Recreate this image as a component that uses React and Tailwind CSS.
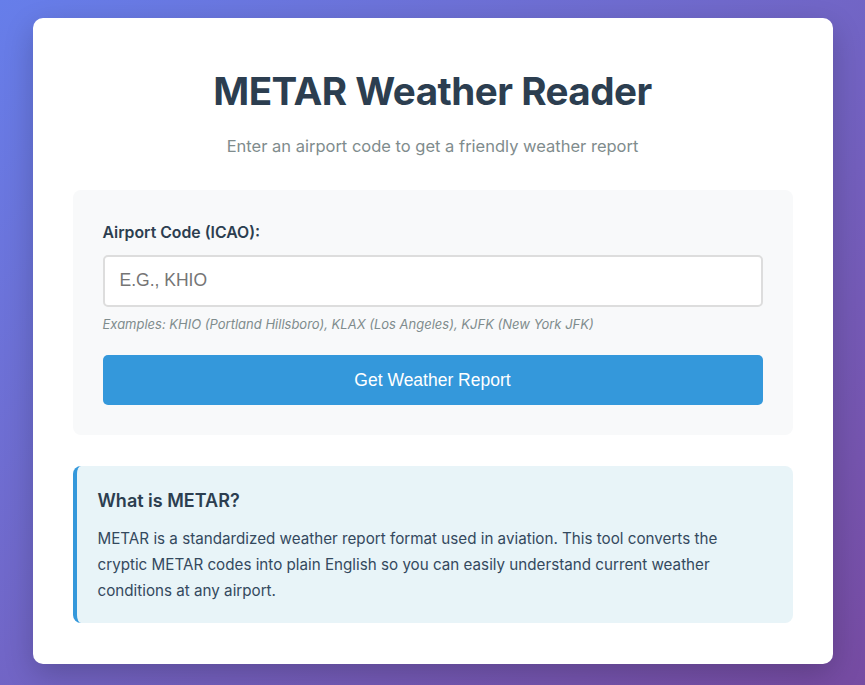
import React, { useState } from 'react';

export default function App() {
  const [code, setCode] = useState('');

  return (
    <div className="min-h-screen flex justify-center bg-gradient-to-br from-[#667eea] to-[#764ba2] pt-[18px] px-5 pb-5" style={{ fontFamily: 'Inter, "Noto Sans", sans-serif' }}>
      <div className="w-[800px] h-fit bg-white rounded-[10px] shadow-[0_10px_30px_rgba(0,0,0,0.2)] px-10 pt-[49px] pb-[41px]">
        {/* Header */}
        <h1 className="text-center text-[38.6px] leading-[48px] font-bold text-[#2c3e50] tracking-[-0.5px]">METAR Weather Reader</h1>
        <p className="text-center text-[16.5px] text-[#7f8c8d] mt-[19px] mb-[31px]">Enter an airport code to get a friendly weather report</p>

        {/* Form */}
        <div className="bg-[#f8f9fa] rounded-lg p-[30px]">
          <label className="block text-[15.8px] font-semibold text-[#2c3e50] mb-[12px] leading-[20px] mt-[3px]">Airport Code (ICAO):</label>
          <input
            value={code}
            onChange={e => setCode(e.target.value)}
            placeholder="e.g., KHIO"
            className="w-full h-[52px] px-[15px] border-2 border-[#ddd] rounded-[5px] bg-white text-[17.5px] uppercase placeholder:text-[#757575] outline-none"
            style={{ fontFamily: '"Liberation Sans", Arial, sans-serif' }}
          />
          <div className="mt-[9px] text-[13px] italic text-[#7f8c8d] leading-[17px]">Examples: KHIO (Portland Hillsboro), KLAX (Los Angeles), KJFK (New York JFK)</div>
          <button
            className="mt-[22px] w-full h-[50px] bg-[#3498db] text-white rounded-[5px] text-[17.5px]"
            style={{ fontFamily: '"Liberation Sans", Arial, sans-serif' }}
          >
            Get Weather Report
          </button>
        </div>

        {/* Info */}
        <div className="mt-[31px] bg-[#e8f4f8] border-l-4 border-[#3498db] rounded-lg pl-[21px] pr-[30px] pt-[23px] pb-[19px]">
          <h3 className="text-[18px] font-semibold text-[#2c3e50] leading-[24px] mb-[13px]">What is METAR?</h3>
          <p className="text-[15.2px] leading-[26px] text-[#34495e]">
            METAR is a standardized weather report format used in aviation. This tool converts the cryptic METAR codes into plain English so you can easily understand current weather conditions at any airport.
          </p>
        </div>
      </div>
    </div>
  );
}
